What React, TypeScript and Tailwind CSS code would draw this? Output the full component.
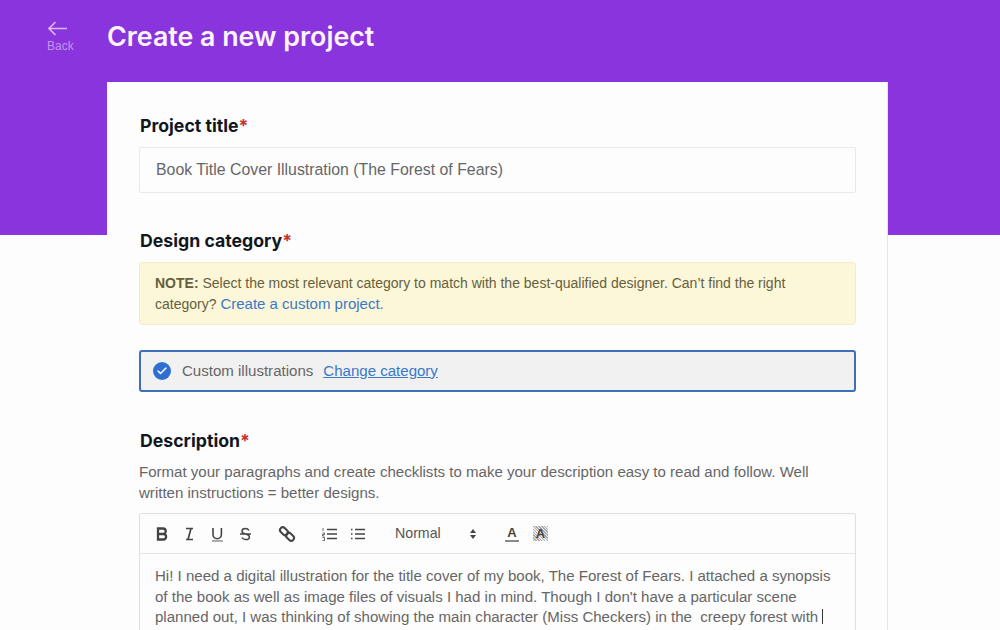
import React from 'react';
import { Check } from 'lucide-react';

const heading = "pl-[1px] font-['Inter',sans-serif] font-bold text-[#12171f] text-[17.700px] leading-[24px]";

const Required = () => <span className="text-[#c9302c]">*</span>;

const Toolbar = () => (
  <div className="h-[40px] flex items-center border-b border-[#e4e4e4] text-[#444444]">
    <svg width="240" height="24" viewBox="0 0 240 24" fill="none" stroke="currentColor" strokeWidth="2" className="ml-[10px] shrink-0">
      {/* bold */}
      <path d="M8 6.500h5a2.700 2.700 0 0 1 0 5.500H8zM8 12h5.800a2.800 2.800 0 0 1 0 5.500H8z" strokeWidth="2.300" />
      {/* italic */}
      <path d="M36 6.500h7M36 17.500h7M41 6.500l-3 11" strokeWidth="1.700" />
      {/* underline */}
      <path d="M63 6v6.500a4.200 4.200 0 0 0 8.400 0V6" strokeWidth="1.600" />
      <path d="M62 19h11" strokeWidth="1.400" stroke="#8a8a8a" />
      {/* strike */}
      <path d="M99 8.500c-.8-1.400-2-2-3.500-2-2 0-3.500 1-3.500 2.700 0 3.800 7.400 2 7.400 5.700 0 1.600-1.500 2.700-3.700 2.700-1.700 0-3-.7-3.800-2.100M90 12h11" strokeWidth="1.500" />
      {/* link */}
      <rect x="129.500" y="6.500" width="9" height="5.500" rx="2.700" transform="rotate(45 134 9.250)" strokeWidth="2" />
      <rect x="135.500" y="12" width="9" height="5.500" rx="2.700" transform="rotate(45 140 14.750)" strokeWidth="2" />
      {/* ordered list */}
      <path d="M177 7.500h10M177 12h10M177 16.500h10" strokeWidth="1.500" />
      <path d="M173 6v3M172.500 11h2v1.500h-2v1.500h2M172.500 15.500h2v3h-2" strokeWidth=".8" />
      {/* bullet list */}
      <path d="M205 7.500h10M205 12h10M205 16.500h10" strokeWidth="1.500" />
      <path d="M201 7.500h1.500M201 12h1.500M201 16.500h1.500" strokeWidth="1.500" />
    </svg>
    <span className="ml-[5px] w-[66px] text-[14.200px] text-[#555555]">Normal</span>
    <svg width="10" height="14" viewBox="0 0 10 14" fill="#444444" className="ml-[7px] shrink-0">
      <path d="M5 2l3 4H2zM5 12l-3-4h6z" />
    </svg>
    <div className="ml-[27px] w-[14px] flex flex-col items-center">
      <span className="font-bold text-[13px] leading-[14px] text-[#444444]">A</span>
      <div className="w-[14px] h-[2px] bg-[#8a8a8a]" />
    </div>
    <div className="ml-[14px] w-[15px] h-[15px] flex items-center justify-center bg-[repeating-linear-gradient(45deg,#aaaaaa_0,#aaaaaa_1px,#eeeeee_1px,#eeeeee_2px)]">
      <span className="font-bold text-[13px] leading-[14px] text-[#444444]">A</span>
    </div>
  </div>
);

export default function App() {
  return (
    <div className="h-[630px] overflow-hidden bg-[#fdfdfe] font-['Liberation_Sans',sans-serif]">
      {/* Purple band */}
      <div className="h-[235px] bg-[#8934dc]">
        <div className="flex h-[82px]">
          <div className="w-[107px] pl-[47px] pt-[21px] flex flex-col items-start">
            <svg width="20" height="15" viewBox="0 0 20 15" fill="none" stroke="#dcb8f5" strokeWidth="1.700">
              <path d="M2 7.500h18M8.500 1L2 7.500 8.500 14" />
            </svg>
            <span className="text-[12px] leading-[14px] mt-[3px] text-[#c596f0]">Back</span>
          </div>
          <h1 className="pt-[18px] font-['Inter',sans-serif] font-semibold text-[26.800px] leading-[36px] text-[#fbf3fd]">
            Create a new project
          </h1>
        </div>
      </div>

      {/* Form card */}
      <div className="-mt-[153px] ml-[107px] w-[781px] h-[560px] bg-[#fdfdfe] border-r border-[#e6e6e8] pl-[32px] pr-[31px] pt-[32px]">
        <h2 className={heading}>Project title<Required /></h2>
        <div className="mt-[9px] h-[46px] flex items-center px-[16px] border border-[#e9e9eb] rounded-[2px] text-[15.850px] text-[#666666]">
          Book Title Cover Illustration (The Forest of Fears)
        </div>

        <h2 className={`${heading} mt-[36px]`}>Design category<Required /></h2>
        <div className="mt-[9px] h-[63px] px-[15px] pt-[10px] bg-[#fcf7d9] border border-[#f3ecc8] rounded-[4px] text-[14px] leading-[21px] text-[#66603c]">
          <span className="font-bold">NOTE:</span> Select the most relevant category to match with the best-qualified designer. Can’t find the right category? <span className="text-[15px] leading-[20px] text-[#3a78c8]">Create a custom project.</span>
        </div>
        <div className="mt-[25px] h-[42px] flex items-center px-[12px] bg-[#f1f1f2] border-2 border-[#3f6fb8] rounded-[3px] text-[15.060px]">
          <span className="w-[18px] h-[18px] rounded-full bg-[#2f6fd0] flex items-center justify-center">
            <Check size={12} strokeWidth={3} className="text-white" />
          </span>
          <span className="ml-[11px] text-[#666666]">Custom illustrations</span>
          <span className="ml-[10px] text-[#3a78c8] underline">Change category</span>
        </div>

        <h2 className={`${heading} mt-[37px]`}>Description<Required /></h2>
        <p className="mt-[8px] pr-[40px] text-[15.060px] leading-[21px] text-[#666666]">
          Format your paragraphs and create checklists to make your description easy to read and follow. Well written instructions = better designs.
        </p>
        <div className="mt-[10px] h-[200px] border border-[#e0e0e0] rounded-[2px]">
          <Toolbar />
          <div className="px-[15px] pt-[12px] text-[15.060px] leading-[20.500px] text-[#666666]">
            Hi! I need a digital illustration for the title cover of my book, The Forest of Fears. I attached a synopsis of the book as well as image files of visuals I had in mind. Though I don't have a particular scene planned out, I was thinking of showing the main character (Miss Checkers) in the&nbsp; creepy forest with
            <span className="inline-block ml-[4px] w-[1px] h-[15px] align-[-2px] bg-[#333333]" />
          </div>
        </div>
      </div>
    </div>
  );
}
